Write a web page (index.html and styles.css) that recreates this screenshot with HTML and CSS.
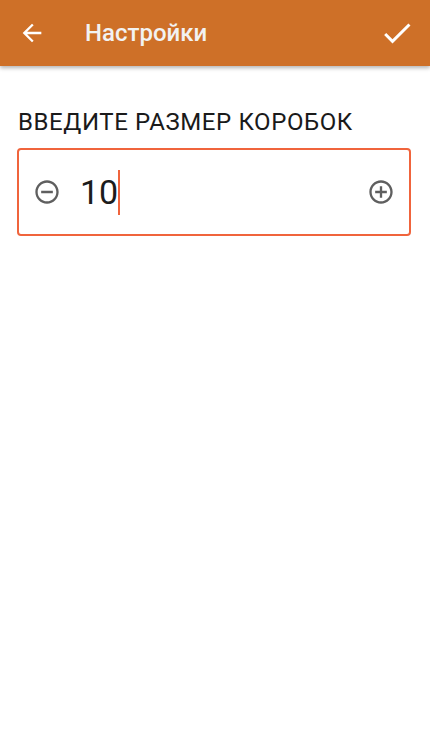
FILE: index.html
```html
<!DOCTYPE html>
<html lang="ru">
<head>
    <meta charset="UTF-8">
    <meta name="viewport" content="width=device-width, initial-scale=1.0">
    <title>Настройки</title>
    <link rel="stylesheet" href="styles.css">
</head>
<body>
    <header class="toolbar">
        <button class="tool-btn back">
            <svg width="28" height="28" viewBox="0 0 24 24"><path d="M20 11H7.83l5.59-5.59L12 4l-8 8 8 8 1.41-1.41L7.83 13H20v-2z" fill="#fff"/></svg>
        </button>
        <h1 class="title">Настройки</h1>
        <button class="tool-btn done">
            <svg width="36" height="36" viewBox="0 0 24 24"><path d="M9 16.17L4.83 12l-1.42 1.41L9 19 21 7l-1.41-1.41z" fill="#fff"/></svg>
        </button>
    </header>
    <main class="content">
        <div class="label">ВВЕДИТЕ РАЗМЕР КОРОБОК</div>
        <div class="stepper">
            <svg class="step-icon" width="28" height="28" viewBox="0 0 24 24"><path d="M7 11v2h10v-2H7zm5-9C6.48 2 2 6.48 2 12s4.48 10 10 10 10-4.48 10-10S17.52 2 12 2zm0 18c-4.41 0-8-3.59-8-8s3.59-8 8-8 8 3.59 8 8-3.59 8-8 8z" fill="#5f5f5f"/></svg>
            <div class="value">10<span class="caret"></span></div>
            <svg class="step-icon" width="28" height="28" viewBox="0 0 24 24"><path d="M13 7h-2v4H7v2h4v4h2v-4h4v-2h-4V7zm-1-5C6.48 2 2 6.48 2 12s4.48 10 10 10 10-4.48 10-10S17.52 2 12 2zm0 18c-4.41 0-8-3.59-8-8s3.59-8 8-8 8 3.59 8 8-3.59 8-8 8z" fill="#5f5f5f"/></svg>
        </div>
    </main>
</body>
</html>
```

FILE: styles.css
```css
body {
    margin: 0;
    padding: 0;
    background: #fff;
    font-family: Roboto, 'Noto Sans', Arial, sans-serif;
}
.toolbar {
    height: 66px;
    background: #ce7028;
    display: flex;
    align-items: center;
    box-shadow: 0 2px 4px rgba(0, 0, 0, 0.3);
}
.tool-btn {
    background: none;
    border: none;
    padding: 0;
    display: flex;
    align-items: center;
    justify-content: center;
}
.back {
    margin-left: 18px;
}
.title {
    margin: 0 0 0 39px;
    flex: 1;
    color: #f2f2f2;
    font-size: 24px;
    font-weight: 500;
}
.done {
    margin-right: 15px;
}
.content {
    padding: 42px 19px 0 17px;
}
.label {
    margin-left: 1px;
    font-size: 24px;
    letter-spacing: 0.6px;
    color: #1a1a1a;
    line-height: 28px;
}
.stepper {
    margin-top: 12px;
    height: 84px;
    border: 2px solid #f0643c;
    border-radius: 4px;
    display: flex;
    align-items: center;
    padding: 0 14px 0 14px;
}
.value {
    flex: 1;
    margin-left: 19px;
    font-size: 34px;
    color: #1c1c1c;
    display: flex;
    align-items: center;
}
.caret {
    display: inline-block;
    width: 2px;
    height: 45px;
    background: #f0643c;
    margin-left: 0;
}
```
